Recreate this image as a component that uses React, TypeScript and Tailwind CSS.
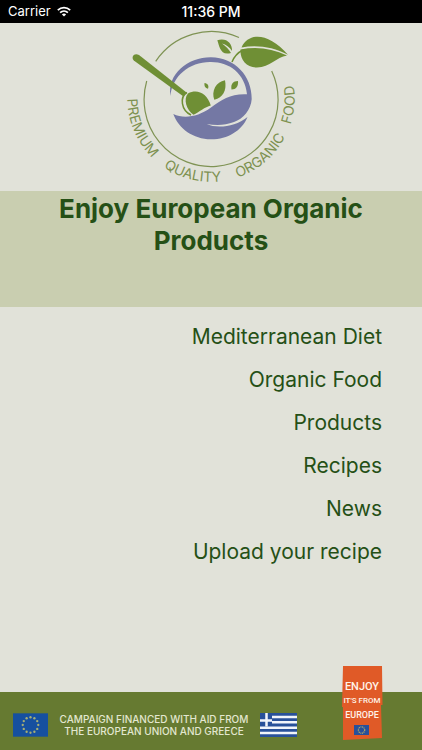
const links = ["Mediterranean Diet", "Organic Food", "Products", "Recipes", "News", "Upload your recipe"];

function WifiIcon() {
  return (
    <svg viewBox="0 0 14 11" className="h-[11px] w-[14px]" fill="none" stroke="white" strokeWidth="1.7" aria-hidden="true">
      <path d="M.8 4.2C4.4.7 9.6.7 13.2 4.2" />
      <path d="M3.1 6.6C5.3 4.5 8.7 4.5 10.9 6.6" />
      <path d="M7 10.6 4.9 8.4C6.1 7.3 7.9 7.3 9.1 8.4Z" fill="white" stroke="none" />
    </svg>
  );
}

function Logo() {
  return (
    <svg viewBox="120 23 182 168" className="h-[168px] w-[182px]" role="img" aria-label="Premium Quality Organic Food">
      <defs>
        <path id="ring" d="M130.2 76.8A83.6 83.6 0 1 0 291.8 76.8" />
      </defs>
      <g fill="none" stroke="#7f9354" strokeWidth="1.2">
        <path d="M155.7 61.3A67 67 0 0 1 239 37.5" />
        <path d="M271.7 71A67 67 0 1 1 146.7 81" />
      </g>
      <g fill="#7d9150" fontFamily="Inter, sans-serif" fontSize="14" textAnchor="middle">
        <text><textPath href="#ring" startOffset="55">PREMIUM</textPath></text>
        <text><textPath href="#ring" startOffset="133">QUALITY</textPath></text>
        <text><textPath href="#ring" startOffset="212">ORGANIC</textPath></text>
        <text><textPath href="#ring" startOffset="277">FOOD</textPath></text>
      </g>
      <g fill="#7478a4">
        <path d="M170.5 96C167 74 188 57 211 57.2C235 57.5 252 76 251.7 99C251 110 243 119 234 122C225 125.500 216 125.500 206.700 124C216 128.500 235 127.500 247.500 117C242 131 227 139.500 211 139.300C193 139 179 129 173.300 114C184 119 198 117 211 107.500C222 99.500 231 93.500 247 94.300C245 74 230 62 211 62C190 61.500 172 76 170.500 96Z" />
      </g>
      <g fill="#6f8f35">
        <path d="M133.800 60.500C130.500 56.500 134.500 52.300 139 55L186.500 92.500L183.500 96.500Z" />
        <path d="M188 93.500C197 88.500 207 93 210.800 105.500C205 107 199 112 193.500 114.800C186.500 110 183 99 188 93.500Z" />
        <path d="M214.300 99.800C211 91 216 82 225 80.300C227 90 223 98 214.300 99.800Z" />
        <path d="M231.500 89.500C230.500 84 233 81 238 81C238.500 86 236 89.500 231.500 89.500Z" />
        <path d="M204.500 83C208 83.500 209 86 208 88.700C205 88 204 86 204.500 83Z" />
        <path d="M217.300 40.300C226 37.500 232.500 43 232 51C229.500 47 226 44.500 222 43.500C226 46.500 229 49.500 231 53C220 56 219.500 46 217.300 40.300Z" />
        <path d="M241.500 47.500C249 31.500 269 33 288 54.700C273 47 257 44.500 241.500 47.500Z" />
        <path d="M240.500 49.500C257 46.300 272 48.500 287 55.500C276 57 270 68 256 67.500C246 66.500 240 60 240.500 49.500Z" />
      </g>
      <g fill="none" stroke="#6f8f35" strokeWidth="1.500">
        <path d="M187 92.500C179.500 97 181 110 191 115" />
        <path d="M232 62C234 57 237 53 243 50" />
      </g>
    </svg>
  );
}

function EuFlag({ className }: { className: string }) {
  const stars = Array.from({ length: 12 }, (_, i) => (i * Math.PI) / 6);
  return (
    <svg viewBox="0 0 36 24" className={className} role="img" aria-label="European Union flag">
      <rect width="36" height="24" fill="#16509f" />
      {stars.map((a) => (
        <circle key={a} cx={18 + 8 * Math.sin(a)} cy={12 - 8 * Math.cos(a)} r="1.200" fill="#a5ae76" />
      ))}
    </svg>
  );
}

function GreekFlag() {
  return (
    <svg viewBox="0 0 37 24" className="h-6 w-[37px]" role="img" aria-label="Greek flag">
      <rect width="37" height="24" fill="#28509a" />
      <path d="M12 4H37M12 9.300H37M0 14.700H37M0 20H37" stroke="#f1f4fb" strokeWidth="2.500" />
      <path d="M0 7.500H12M6.500 0V13.500" stroke="#f1f4fb" strokeWidth="2.500" />
    </svg>
  );
}

function EnjoyBadge() {
  return (
    <svg viewBox="0 0 41 74" className="h-[74px] w-[41px]" role="img" aria-label="Enjoy it's from Europe">
      <path d="M1 0H40L40.500 39H39L40 72L1 74V41H0Z" fill="#e05a27" />
      <g fill="#fff3e8" fontFamily="Roboto, sans-serif" fontWeight="500" textAnchor="middle">
        <text x="20" y="24" fontSize="11">ENJOY</text>
        <text x="20" y="37" fontSize="8">IT'S FROM</text>
        <text x="20" y="52" fontSize="9">EUROPE</text>
      </g>
      <rect x="12" y="59" width="15" height="10" fill="#27509a" />
      <circle cx="19.500" cy="64" r="3.200" fill="none" stroke="#b9ad63" strokeWidth="1.200" strokeDasharray="1 .7" />
    </svg>
  );
}

export default function App() {
  return (
    <div className="flex min-h-screen flex-col bg-[#e1e2d9] font-['Inter',sans-serif] text-[#255016]">
      <header className="grid h-[23px] grid-cols-3 items-center bg-black px-2 text-[13px] text-white">
        <div className="flex items-center gap-1.5"><span>Carrier</span><WifiIcon /></div>
        <time className="text-center text-[14px] font-medium">11:36 PM</time>
      </header>
      <div className="flex justify-center"><Logo /></div>
      <div className="h-[116px] bg-[#c9ceb0] px-10 pt-0.5">
        <h1 className="text-center text-[26px] leading-8 font-bold">Enjoy European Organic Products</h1>
      </div>
      <nav className="flex grow flex-col items-end px-10 pt-2">
        {links.map((label) => (
          <a key={label} href="#" className="text-[21px] leading-[43px]">{label}</a>
        ))}
      </nav>
      <footer className="flex h-[58px] items-end bg-[#667a31] pr-[39px] pb-[10px] pl-[13px]">
        <div className="flex grow items-center pb-[3px]">
          <EuFlag className="h-6 w-[35px]" />
          <p className="w-[212px] text-center text-[10px] leading-3 font-medium whitespace-nowrap text-[#e3e7d0]">
            CAMPAIGN FINANCED WITH AID FROM<br />THE EUROPEAN UNION AND GREECE
          </p>
          <GreekFlag />
        </div>
        <EnjoyBadge />
      </footer>
    </div>
  );
}
